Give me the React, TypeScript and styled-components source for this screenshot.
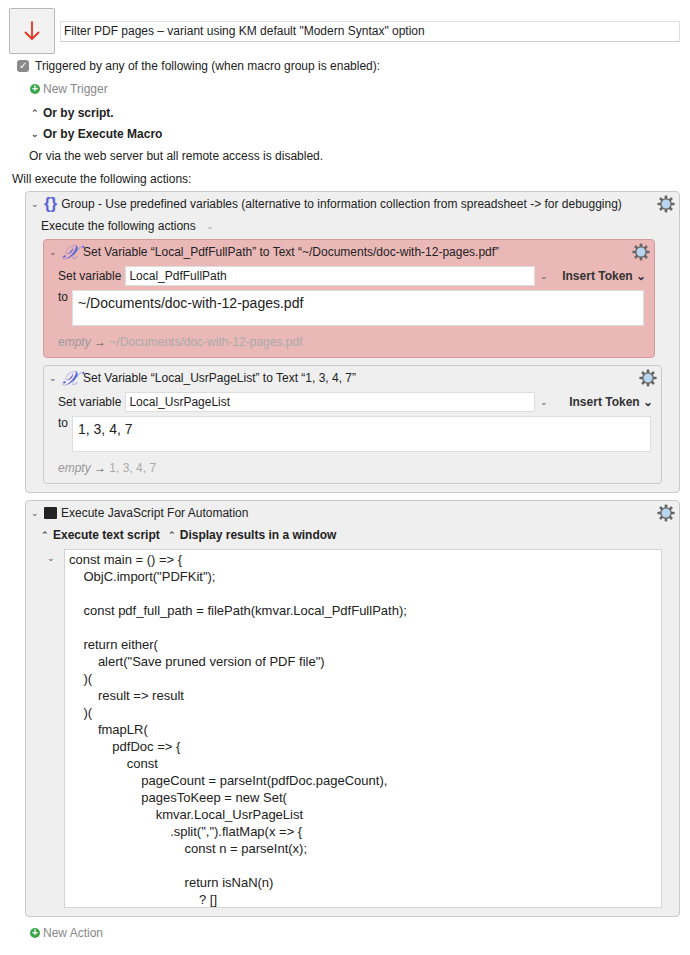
import React from 'react';
import styled, { createGlobalStyle } from 'styled-components';

const Global = createGlobalStyle`
  body { margin: 0; background: #fff; font-family: "Liberation Sans", Arial, sans-serif; font-size: 12px; color: #222; }
`;

const Page = styled.div`
  width: 690px;
  padding: 8px 10px 0 9px;
  box-sizing: border-box;
`;

const TitleRow = styled.div`
  display: flex;
  align-items: flex-start;
  gap: 5px;
`;

const IconBox = styled.div`
  flex-shrink: 0;
  width: 46px;
  height: 46px;
  border: 1px solid #b8b8b8;
  background: #f2f2f2;
  display: flex;
  align-items: center;
  justify-content: center;
  box-sizing: border-box;
  border-radius: 2px;
`;

const TitleField = styled.div`
  flex: 1;
  margin-top: 13px;
  height: 19px;
  border: 1px solid #e0e0e0;
  border-bottom-color: #cfcfcf;
  padding: 0 3px;
  line-height: 19px;
  font-size: 12px;
`;

const Line = styled.div<{ indent: number; top: number; bold?: boolean; muted?: boolean }>`
  display: flex;
  align-items: center;
  gap: 3px;
  padding-left: ${p => p.indent}px;
  margin-top: ${p => p.top}px;
  height: 16px;
  font-weight: ${p => (p.bold ? 700 : 400)};
  color: ${p => (p.muted ? '#888' : '#222')};
`;

const Check = styled.span`
  width: 12px;
  height: 12px;
  border-radius: 3px;
  background: #8a8a8a;
  color: #fff;
  font-size: 10px;
  line-height: 12px;
  text-align: center;
  margin-right: 3px;
`;

const Plus = styled.span`
  width: 10px;
  height: 10px;
  border-radius: 50%;
  background: #3aa64b;
  color: #fff;
  font-size: 10px;
  line-height: 10px;
  text-align: center;
  font-weight: 700;
`;

const Box = styled.div<{ tone?: 'red' | 'gray'; ml?: number; mr?: number; mt?: number }>`
  margin: ${p => p.mt ?? 0}px ${p => p.mr ?? 0}px 0 ${p => p.ml ?? 0}px;
  border: 1px solid ${p => (p.tone === 'red' ? '#d49a9a' : '#c9c9c9')};
  background: ${p => (p.tone === 'red' ? '#ebb8b8' : '#efefef')};
  border-radius: 4px;
  padding-bottom: 8px;
`;

const Header = styled.div`
  display: flex;
  align-items: center;
  height: 22px;
  padding: 1px 4px 0 4px;
  gap: 4px;
  font-size: 12px;
`;

const HeadText = styled.span`
  flex: 1;
  white-space: nowrap;
`;

const Chev = styled.span`
  font-size: 9px;
  color: #555;
  width: 10px;
  text-align: center;
`;

const Field = styled.div`
  display: flex;
  align-items: center;
  height: 20px;
  margin: 3px 8px 0 14px;
  gap: 4px;
`;

const Input = styled.div<{ w: number }>`
  width: ${p => p.w}px;
  height: 18px;
  background: #fff;
  border: 1px solid #ddd;
  line-height: 18px;
  padding: 0 3px;
`;

const Token = styled.span`
  font-weight: 700;
  margin-left: auto;
  color: #333;
`;

const ToRow = styled.div`
  display: flex;
  align-items: flex-start;
  margin: 4px 10px 0 14px;
  gap: 4px;
`;

const TextArea = styled.div`
  flex: 1;
  height: 36px;
  background: #fff;
  border: 1px solid #ddd;
  padding: 4px 5px;
  font-size: 14px;
  box-sizing: border-box;
`;

const Empty = styled.div`
  margin: 9px 0 0 14px;
  color: #aaa;
  font-size: 12px;
  em { color: #999; }
  b { color: #555; font-weight: 400; }
`;

const CodeRow = styled.div`
  display: flex;
  align-items: flex-start;
`;

const Code = styled.div`
  margin: 6px 17px 0 0;
  flex: 1;
  height: 359px;
  overflow: hidden;
  background: #fff;
  border: 1px solid #d4d4d4;
  padding: 1px 4px;
  font-size: 13px;
  line-height: 17px;
  white-space: pre;
  box-sizing: border-box;
`;

const Gear = () => (
  <svg width="18" height="18" viewBox="0 0 20 20">
    <g fill="#666">
      {Array.from({ length: 8 }).map((_, i) => (
        <rect key={i} x="8.5" y="0.5" width="3" height="5" rx="0.8" transform={`rotate(${i * 45} 10 10)`} />
      ))}
      <circle cx="10" cy="10" r="6.5" />
    </g>
    <circle cx="10" cy="10" r="5" fill="#b9d4ef" />
  </svg>
);

const XIcon = styled.span`
  color: #5a63d6;
  font-family: "Liberation Serif", serif;
  font-style: italic;
  font-size: 20px;
  line-height: 18px;
`;

const code = `const main = () => {
    ObjC.import("PDFKit");

    const pdf_full_path = filePath(kmvar.Local_PdfFullPath);

    return either(
        alert("Save pruned version of PDF file")
    )(
        result => result
    )(
        fmapLR(
            pdfDoc => {
                const
                    pageCount = parseInt(pdfDoc.pageCount),
                    pagesToKeep = new Set(
                        kmvar.Local_UsrPageList
                            .split(",").flatMap(x => {
                                const n = parseInt(x);

                                return isNaN(n)
                                    ? []`;

export default function App() {
  return (
    <Page>
      <Global />
      <TitleRow>
        <IconBox>
          <svg width="16" height="20" viewBox="0 0 16 20">
            <path d="M8 1v17M1.5 11.5L8 18l6.5-6.5" stroke="#e8321e" strokeWidth="1.8" fill="none" strokeLinecap="round" />
          </svg>
        </IconBox>
        <TitleField>Filter PDF pages – variant using KM default "Modern Syntax" option</TitleField>
      </TitleRow>
      <Line indent={8} top={4}><Check>✓</Check>Triggered by any of the following (when macro group is enabled):</Line>
      <Line indent={21} top={7} muted><Plus>+</Plus>New Trigger</Line>
      <Line indent={21} top={8} bold><Chev>⌃</Chev>Or by script.</Line>
      <Line indent={21} top={5} bold><Chev>⌄</Chev>Or by Execute Macro</Line>
      <Line indent={20} top={6}>Or via the web server but all remote access is disabled.</Line>
      <Line indent={3} top={7}>Will execute the following actions:</Line>

      <Box ml={16} mt={4}>
        <Header>
          <Chev>⌄</Chev>
          <span style={{ color: '#5a63d6', fontSize: 17, fontWeight: 700 }}>{'{}'}</span>
          <HeadText>Group - Use predefined variables (alternative to information collection from spreadsheet -&gt; for debugging)</HeadText>
          <Gear />
        </Header>
        <Line indent={15} top={3}>Execute the following actions <Chev style={{ marginLeft: 6, color: '#aaa' }}>⌄</Chev></Line>

        <Box tone="red" ml={17} mr={24} mt={5}>
          <Header>
            <Chev>⌄</Chev><XIcon>𝒳</XIcon>
            <HeadText>Set Variable “Local_PdfFullPath” to Text “~/Documents/doc-with-12-pages.pdf”</HeadText>
            <Gear />
          </Header>
          <Field>Set variable <Input w={402}>Local_PdfFullPath</Input><Chev>⌄</Chev><Token>Insert Token ⌄</Token></Field>
          <ToRow>to <TextArea>~/Documents/doc-with-12-pages.pdf</TextArea></ToRow>
          <Empty><em>empty</em> <b>→</b> ~/Documents/doc-with-12-pages.pdf</Empty>
        </Box>

        <Box ml={17} mr={17} mt={7}>
          <Header>
            <Chev>⌄</Chev><XIcon>𝒳</XIcon>
            <HeadText>Set Variable “Local_UsrPageList” to Text “1, 3, 4, 7”</HeadText>
            <Gear />
          </Header>
          <Field>Set variable <Input w={402}>Local_UsrPageList</Input><Chev>⌄</Chev><Token>Insert Token ⌄</Token></Field>
          <ToRow>to <TextArea>1, 3, 4, 7</TextArea></ToRow>
          <Empty><em>empty</em> <b>→</b> 1, 3, 4, 7</Empty>
        </Box>
      </Box>

      <Box ml={16} mt={7}>
        <Header>
          <Chev>⌄</Chev>
          <span style={{ width: 13, height: 12, background: '#222', borderRadius: 1 }} />
          <HeadText>Execute JavaScript For Automation</HeadText>
          <Gear />
        </Header>
        <Line indent={14} top={3} bold><Chev>⌃</Chev>Execute text script <Chev style={{ marginLeft: 4 }}>⌃</Chev>Display results in a window</Line>
        <CodeRow>
          <Chev style={{ margin: '10px 8px 0 20px' }}>⌄</Chev>
          <Code>{code}</Code>
        </CodeRow>
      </Box>
      <Line indent={21} top={8} muted><Plus>+</Plus>New Action</Line>
    </Page>
  );
}
